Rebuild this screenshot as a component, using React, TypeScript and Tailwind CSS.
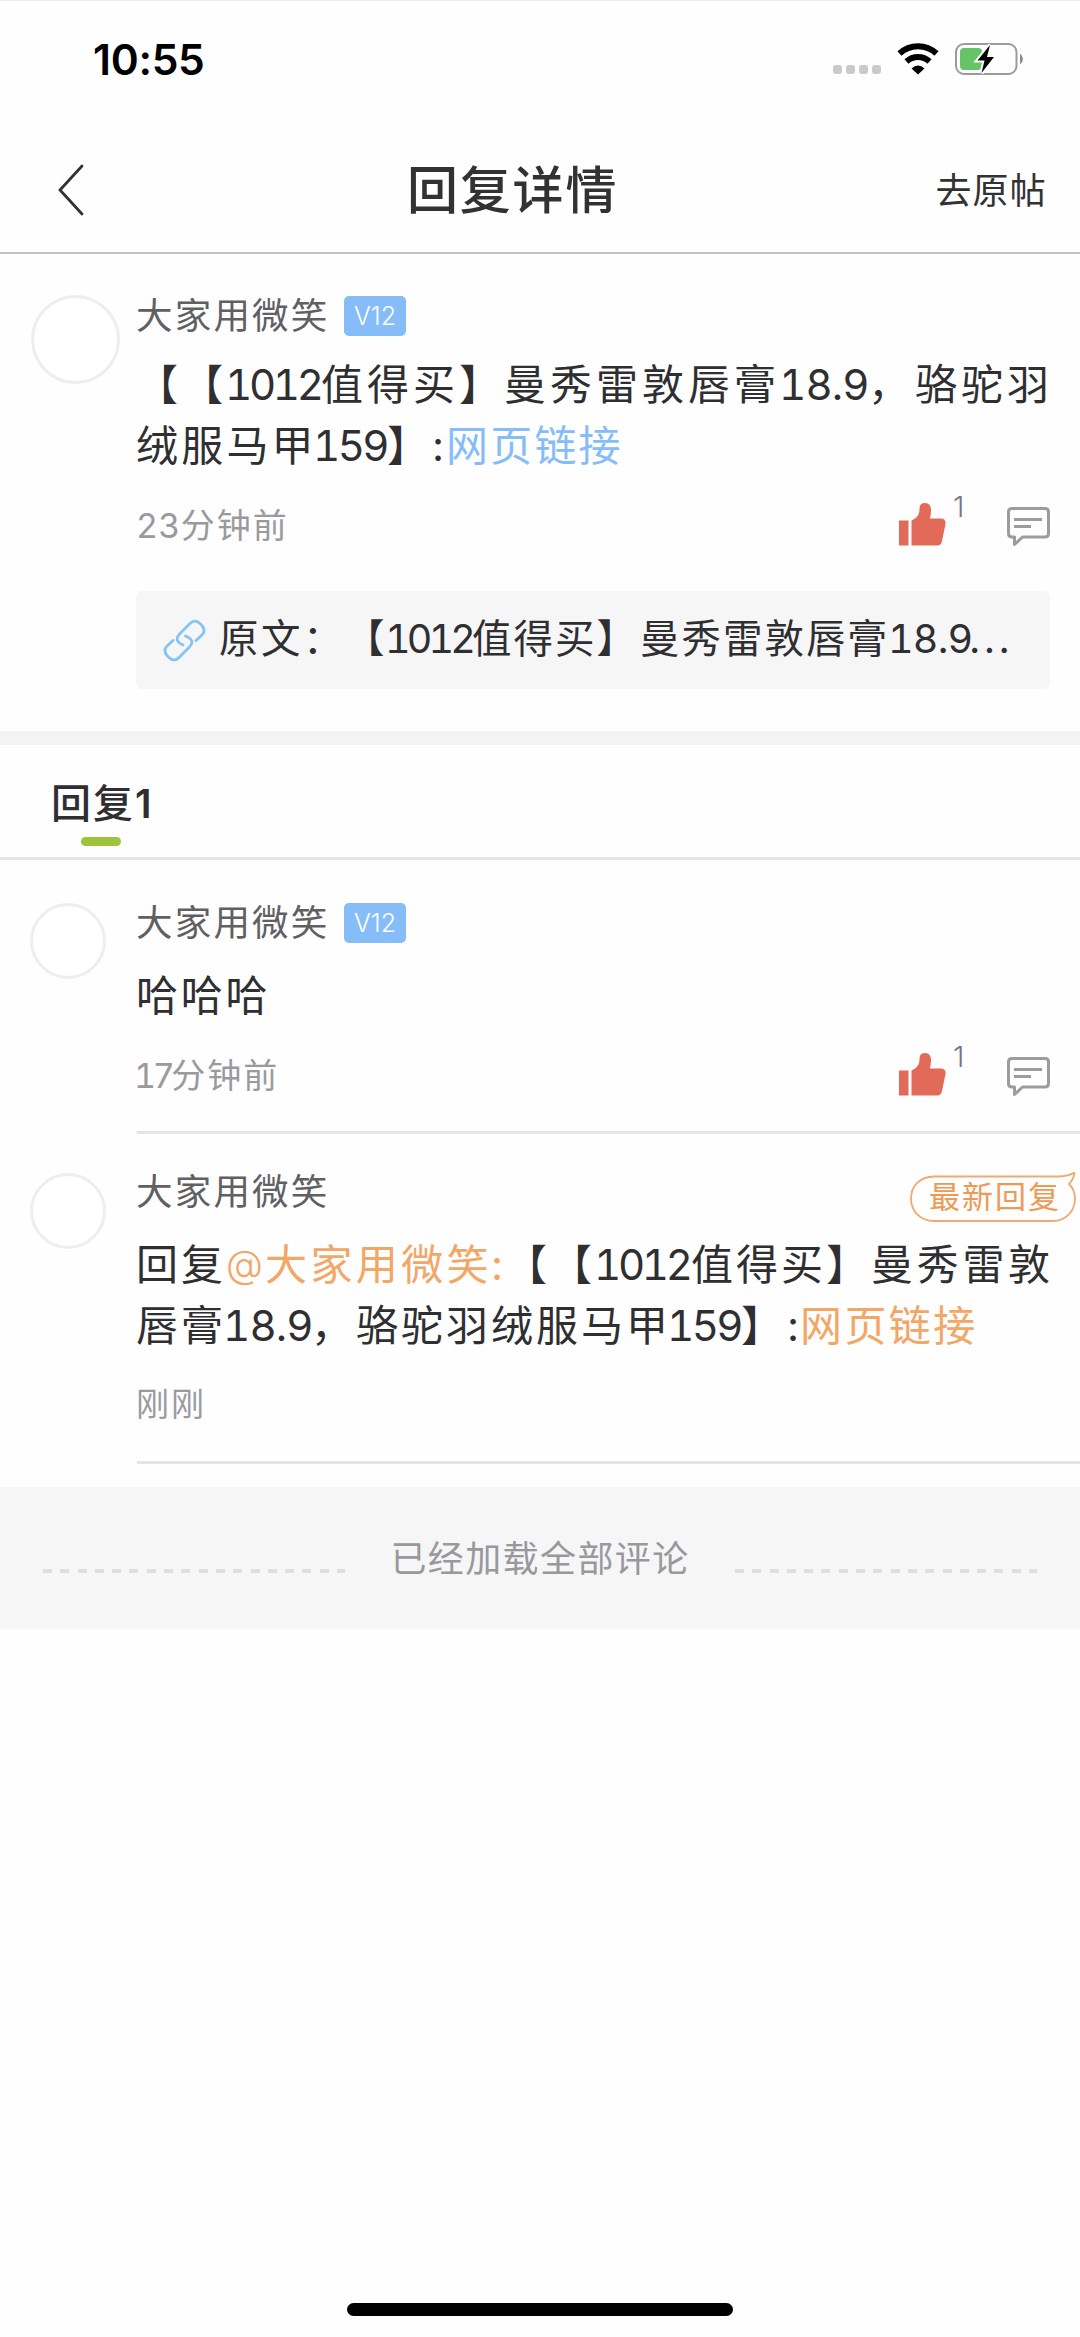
import type { ReactNode } from "react";
import clsx from "clsx";

const FONT = "font-['Inter','Noto_Sans_CJK_SC',sans-serif] [text-spacing-trim:space-all]";

function StatusBar() {
  return (
    <div className="flex h-[118px] items-start justify-between border-t border-[#ececec] pl-[93px] pr-[56px]">
      <span className="mt-[33px] text-[42.5px] leading-[52px] font-semibold tracking-[-0.3px] text-black">
        10:55
      </span>
      <svg className="mt-[40px]" width="192" height="38" viewBox="832 41 192 38">
        {[833, 846, 859, 872].map((x) => (
          <rect key={x} x={x} y="65" width="9" height="9" rx="3" fill="#cacaca" />
        ))}
        <g fill="none" stroke="#000" strokeWidth="6">
          <path d="M899.5 53.5 A27 27 0 0 1 936.5 53.5" />
          <path d="M906.5 61.5 A17 17 0 0 1 929.5 61.5" />
        </g>
        <path d="M911.5 68.5 Q918 62.5 924.5 68.5 L918 74.5 Z" fill="#000" />
        <rect x="956" y="44" width="60.5" height="30" rx="8" fill="none" stroke="#9b9b9b" strokeWidth="2" />
        <rect x="960" y="48" width="22" height="22" rx="4" fill="#65c466" />
        <path d="M1020 53.5 Q1026 59 1020 64.5 Z" fill="#8c8c8c" />
        <path
          d="M990 45 L977.5 60.5 H984.5 L981.5 73 L994 57 H987 Z"
          fill="#000"
          stroke="#fff"
          strokeWidth="4"
          paintOrder="stroke"
        />
      </svg>
    </div>
  );
}

function NavBar() {
  return (
    <header className="flex h-[136px] items-start border-b-2 border-[#c4c4c4] pl-[57px] pr-[33px]">
      <svg className="mt-[46px]" width="120" height="52" viewBox="0 0 120 52">
        <path d="M25 2 L3 26 L25 50" fill="none" stroke="#323233" strokeWidth="2.8" strokeLinecap="round" />
      </svg>
      <h1 className="mt-[38px] ml-[230px] text-[51px] leading-[70px] font-medium tracking-[1.8px] text-[#323233]">
        回复详情
      </h1>
      <span className="mt-[48px] ml-auto text-[36px] leading-[50px] tracking-[1.2px] text-[#323233]">去原帖</span>
    </header>
  );
}

function Avatar({ large = false }: { large?: boolean }) {
  return (
    <div
      className={clsx(
        "shrink-0 rounded-full border-[3px] border-[#eeeeee] bg-white",
        large ? "size-[89px]" : "size-[76px]",
      )}
    />
  );
}

function UserName({ level }: { level?: string }) {
  return (
    <div className="flex h-[40px] items-center">
      <span className="w-[208px] text-[36.5px] leading-[40px] tracking-[2.2px] whitespace-nowrap text-[#606063]">
        大家用微笑
      </span>
      {level && (
        <span className="flex h-[40px] w-[62px] items-center justify-center rounded-[5px] bg-[#86bdf8] pt-[2px] text-[25px] font-light text-white">
          {level}
        </span>
      )}
    </div>
  );
}

function Run({ className, children }: { className: string; children: ReactNode }) {
  return <span className={clsx("shrink-0 whitespace-nowrap", className)}>{children}</span>;
}

function Line({ children }: { children: ReactNode }) {
  return <p className="flex h-[61px] text-[42px] leading-[61px] text-[#2f2f31]">{children}</p>;
}

function Actions() {
  return (
    <div className="-mt-[3px] flex items-start">
      <svg width="48" height="43" viewBox="0 0 48 43" fill="#e16b58">
        <rect x="0" y="17.5" width="9.5" height="25" />
        <path d="M12.5 42.5 V17.5 C18 15 20.5 11.5 20.5 6 C20.5 2 22.5 0 26 0 C30 0 32 3 32 7 C32 10 31.5 13 31 15.5 H42 C45.5 15.5 47 18 46.5 21 L43 38 C42 41.5 41 42.5 38 42.5 Z" />
      </svg>
      <span className="-mt-[12px] ml-[6px] w-[54px] text-[29px] leading-[32px] font-light text-[#74748a]">1</span>
      <svg className="mt-[4px]" width="43" height="40" viewBox="0 0 43 40" fill="none" stroke="#9b9ba0">
        <path
          d="M5 1.5 H38 Q41.5 1.5 41.5 5 V26.5 Q41.5 30 38 30 H15.5 L7.5 37.5 V30 H5 Q1.5 30 1.5 26.5 V5 Q1.5 1.5 5 1.5 Z"
          strokeWidth="3"
          strokeLinejoin="round"
        />
        <path d="M7 12.5 H35 M7 19.5 H24" strokeWidth="3" />
      </svg>
    </div>
  );
}

function LatestTag() {
  return (
    <div className="relative flex h-[50px] w-[166px] items-start pl-[19px] text-[31px] leading-[50px]">
      <svg className="absolute inset-0" width="166" height="50" viewBox="0 0 166 50">
        <path
          d="M24 4.5 H148 C154 4.5 160 3 164.5 0.7 C164 5 162 9 159 12 C163 16 165 21 165 26.5 C165 39 156 49 143 49 H24 C10 49 1 39 1 26.5 C1 14 10 4.5 24 4.5 Z"
          fill="none"
          stroke="#efaa72"
          strokeWidth="1.8"
        />
      </svg>
      <span className="tracking-[2px] whitespace-nowrap text-[#ee9a55]">最新回复</span>
    </div>
  );
}

function SourceLink() {
  return (
    <div className="mt-[44px] flex h-[98px] w-[914px] items-center rounded-[6px] bg-[#f6f6f7] pl-[27px] text-[39.5px] text-[#2f2f31]">
      <svg width="43" height="43" viewBox="0 0 43 43" fill="none" stroke="#84c5f4" strokeWidth="2.8" strokeLinecap="round">
        <path d="M20 26 C13 23 12.5 19 17 14.5 L27 4.5 C30 1 34 1.5 37 4.5 L38.5 6 C42 10 42 13 39 16 L33 21.5" />
        <path d="M22.5 17 C30 20 30.5 24 26 28.5 L16 38.5 C13 42 9 41.5 6 38.5 L4.5 37 C1 33 1 30 4 27 L10 21.5" />
      </svg>
      <Run className="ml-[13px] w-[126px] tracking-[2.5px]">原文：</Run>
      <Run className="w-[40px]">【</Run>
      <Run className="w-[87px] tabular-nums tracking-[-3.9px]">1012</Run>
      <Run className="w-[168px] tracking-[2px]">值得买】</Run>
      <Run className="w-[248px] tracking-[2px]">曼秀雷敦唇膏</Run>
      <Run className="w-[81px] tabular-nums tracking-[-0.8px]">18.9</Run>
      <Run className="tracking-[3.4px]">...</Run>
    </div>
  );
}

function Post() {
  return (
    <section className="flex h-[477px] pt-[41px] pl-[31px]">
      <Avatar large />
      <div className="mt-px ml-[16px] flex flex-col">
        <UserName level="V12" />
        <div className="mt-[18px]">
          <Line>
            <Run className="w-[89px] tracking-[3.3px]">【【</Run>
            <Run className="w-[96px] tabular-nums tracking-[-3.3px]">1012</Run>
            <Run className="w-[183px] tracking-[4px]">值得买】</Run>
            <Run className="w-[275px] tracking-[4px]">曼秀雷敦唇膏</Run>
            <Run className="w-[89px] tabular-nums tracking-[-0.8px]">18.9</Run>
            <Run className="w-[47px]">，</Run>
            <Run className="tracking-[4px]">骆驼羽</Run>
          </Line>
          <Line>
            <Run className="w-[177px] tracking-[3.2px]">绒服马甲</Run>
            <Run className="w-[74px] tabular-nums tracking-[-2.6px]">159</Run>
            <Run className="w-[45px]">】</Run>
            <Run className="w-[14px]">:</Run>
            <Run className="tracking-[2.2px] text-[#86bdf8]">网页链接</Run>
          </Line>
        </div>
        <div className="mt-[30px] flex w-[914px] items-start justify-between">
          <span className="text-[34px] leading-[40px] tracking-[2px] text-[#9a9a9e]">
            <span className="tabular-nums tracking-[0.3px]">23</span>分钟前
          </span>
          <Actions />
        </div>
        <SourceLink />
      </div>
    </section>
  );
}

function Divider() {
  return <div className="ml-[137px] h-[3px] bg-[#e4e4e4]" />;
}

export default function App() {
  return (
    <div className={clsx("flex h-[2337px] w-[1080px] flex-col overflow-hidden bg-[#fefefe]", FONT)} lang="zh-CN">
      <StatusBar />
      <NavBar />
      <Post />
      <div className="h-[14px] bg-[#f3f3f4]" />

      {/* Replies tab */}
      <div className="flex h-[115px] items-start border-b-[3px] border-[#e4e4e5] pl-[51px]">
        <div className="flex flex-col">
          <span className="mt-[31px] text-[40px] leading-[56px] font-medium tracking-[2px] text-[#2f2f31]">
            回复<span className="text-[39px] font-semibold">1</span>
          </span>
          <div className="mt-[5px] ml-[30px] h-[9px] w-[40px] rounded-full bg-[#9ec43e]" />
        </div>
      </div>

      <article className="flex h-[271px] pt-[43px] pl-[30px]">
        <Avatar />
        <div className="ml-[30px] flex flex-col">
          <UserName level="V12" />
          <div className="mt-[22px]">
            <Line>
              <Run className="tracking-[2.8px]">哈哈哈</Run>
            </Line>
          </div>
          <div className="mt-[30px] flex w-[914px] items-start justify-between">
            <span className="text-[34px] leading-[40px] tracking-[2px] text-[#9a9a9e]">
              <span className="-ml-[2px] tabular-nums tracking-[-3.4px]">17</span>分钟前
            </span>
            <Actions />
          </div>
        </div>
      </article>
      <Divider />

      <article className="flex h-[327px] pt-[39px] pl-[30px]">
        <Avatar />
        <div className="-mt-px ml-[30px] flex flex-col">
          <div className="flex h-[50px] w-[940px] items-start justify-between">
            <UserName />
            <LatestTag />
          </div>
          <div className="mt-[12px]">
            <Line>
              <Run className="w-[90px] tracking-[3px]">回复</Run>
              <Run className="w-[39px] text-[38px] font-light text-[#f2a766]">@</Run>
              <Run className="w-[226px] tracking-[3.4px] text-[#f2a766]">大家用微笑</Run>
              <Run className="w-[14px] text-[#f2a766]">:</Run>
              <Run className="w-[89px] tracking-[3px]">【【</Run>
              <Run className="w-[97px] tabular-nums tracking-[-3.3px]">1012</Run>
              <Run className="w-[180px] tracking-[3px]">值得买】</Run>
              <Run className="tracking-[3.7px]">曼秀雷敦</Run>
            </Line>
            <Line>
              <Run className="w-[87px] tracking-[3px]">唇膏</Run>
              <Run className="w-[88px] tabular-nums tracking-[-0.8px]">18.9</Run>
              <Run className="w-[45px]">，</Run>
              <Run className="w-[311px] tracking-[3px]">骆驼羽绒服马甲</Run>
              <Run className="w-[74px] tabular-nums tracking-[-2.6px]">159</Run>
              <Run className="w-[46px]">】</Run>
              <Run className="w-[13px]">:</Run>
              <Run className="tracking-[2.4px] text-[#f2a766]">网页链接</Run>
            </Line>
          </div>
          <span className="mt-[28px] text-[33px] leading-[40px] tracking-[2px] text-[#9a9a9e]">刚刚</span>
        </div>
      </article>
      <Divider />

      <footer className="mt-[23px] flex h-[142px] items-start justify-between bg-[#f6f6f7] px-[43px] pt-[45px]">
        <div className="mt-[37px] h-[4px] w-[302px] bg-[repeating-linear-gradient(90deg,#dededf_0_9px,transparent_9px_17.3px)]" />
        <span className="text-[36px] leading-[54px] tracking-[1.4px] text-[#98989d]">已经加载全部评论</span>
        <div className="mt-[37px] h-[4px] w-[302px] bg-[repeating-linear-gradient(90deg,#dededf_0_9px,transparent_9px_17.3px)]" />
      </footer>

      <div className="mx-auto mt-auto mb-[21px] h-[13px] w-[386px] rounded-full bg-black" />
    </div>
  );
}
